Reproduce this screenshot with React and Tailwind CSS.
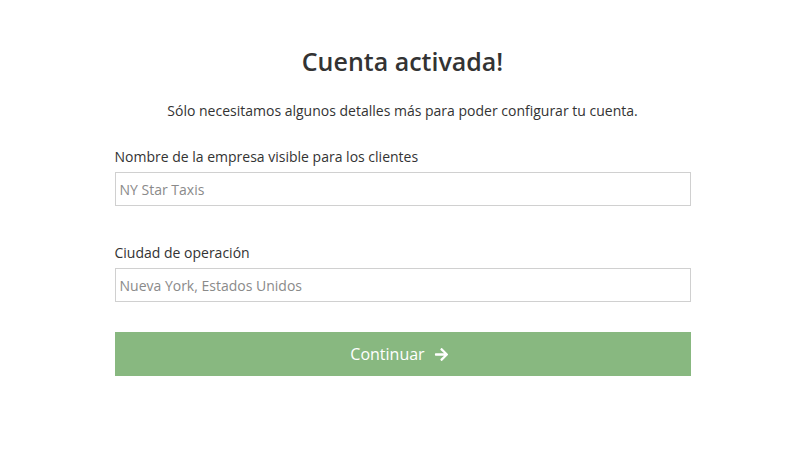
import React from "react";

const ArrowRight = () => (
  <svg viewBox="0 0 448 512" className="mr-[6px] w-[15px] h-[15px] fill-white" aria-hidden="true">
    <path d="M190.5 66.9l22.2-22.2c9.4-9.4 24.6-9.4 33.9 0L441 239c9.4 9.4 9.4 24.6 0 33.9L246.6 467.3c-9.4 9.4-24.6 9.4-33.9 0l-22.2-22.2c-9.5-9.5-9.3-25 .4-34.3L311.4 296H24c-13.3 0-24-10.7-24-24v-32c0-13.3 10.7-24 24-24h287.4L190.9 101.2c-9.8-9.3-10-24.8-.4-34.3z" />
  </svg>
);

const Field = ({ label, placeholder }) => (
  <div className="flex flex-col">
    <label className="text-[14px] leading-[20px] text-[#333]">{label}</label>
    <input
      type="text"
      placeholder={placeholder}
      className="mt-[5px] h-[34px] w-full border border-[#d0d0d0] bg-white px-[4px] text-[14px] text-[#333] placeholder:text-[#8a8a8a] outline-none"
      style={{ fontFamily: '"Open Sans", "Noto Sans", sans-serif' }}
    />
  </div>
);

export default function App() {
  return (
    <div
      className="min-h-[460px] w-full bg-white"
      style={{ fontFamily: '"Open Sans", "Noto Sans", sans-serif' }}
    >
      <div className="mx-auto flex w-[576px] flex-col pt-[44px]">
        <h1 className="text-center text-[25px] leading-[35px] font-semibold text-[#333]">
          Cuenta activada!
        </h1>
        <p className="mt-[22px] text-center text-[14px] leading-[20px] text-[#333]">
          Sólo necesitamos algunos detalles más para poder configurar tu cuenta.
        </p>
        <div className="mt-[26px]">
          <Field label="Nombre de la empresa visible para los clientes" placeholder="NY Star Taxis" />
        </div>
        <div className="mt-[37px]">
          <Field label="Ciudad de operación" placeholder="Nueva York, Estados Unidos" />
        </div>
        <button className="mt-[30px] flex h-[44px] w-full items-center justify-center gap-[9px] bg-[#88b880] text-[16px] text-white">
          <span>Continuar</span>
          <ArrowRight />
        </button>
      </div>
    </div>
  );
}
